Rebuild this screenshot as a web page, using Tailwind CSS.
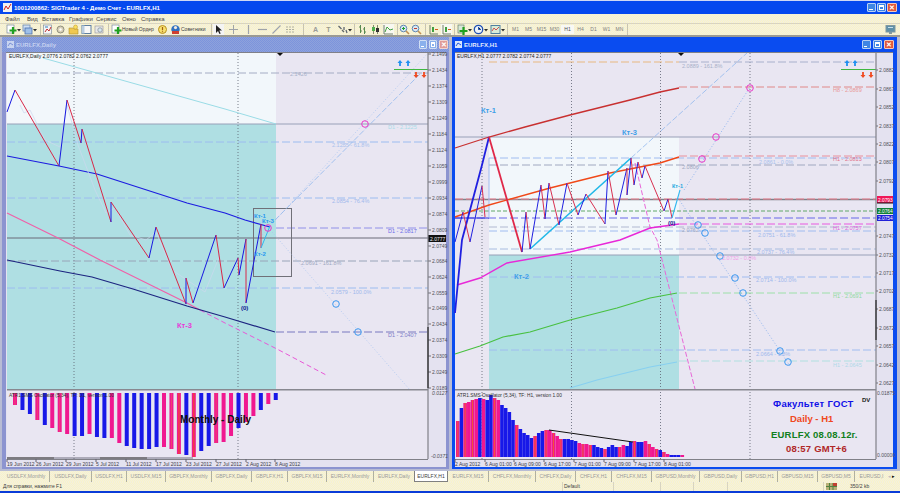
<!DOCTYPE html>
<html lang="ru">
<head>
  <meta charset="UTF-8" />
  <title>SIGTrader 4</title>
  <script src="https://cdn.jsdelivr.net/npm/@tailwindcss/browser@4"></script>
</head>
<body class="w-[900px] h-[493px] overflow-hidden bg-[#d8d8e4] font-['Liberation_Sans',sans-serif] text-[6px] leading-none">

  <!-- shared toolbar icons -->
  <svg class="hidden">
    <symbol id="i-new" viewBox="0 0 11 11"><rect x="1" y="1" width="7" height="8" fill="#fff" stroke="#7a8a9a" stroke-width=".7"/><path d="M7 3v7M3.5 6.5h7" stroke="#20a020" stroke-width="2.2"/></symbol>
    <symbol id="i-prof" viewBox="0 0 11 11"><rect x="1" y="1" width="7" height="6" fill="#cfe0f4" stroke="#6c88b0" stroke-width=".8"/><rect x="3" y="4" width="7" height="6" fill="#9fc0e8" stroke="#4c70b0" stroke-width=".8"/></symbol>
    <symbol id="i-market" viewBox="0 0 11 11"><rect x="1.5" y="1" width="8" height="9" fill="#f4f4f4" stroke="#8090a0" stroke-width=".7"/><path d="M3 8l2-3 2 2 2-4" stroke="#c03030" fill="none"/><path d="M3 3h3" stroke="#3080c0"/></symbol>
    <symbol id="i-nav" viewBox="0 0 11 11"><circle cx="5.5" cy="5.5" r="3.5" fill="#d8d0b8" stroke="#909080"/><circle cx="5.5" cy="5.5" r="1.2" fill="#fff"/></symbol>
    <symbol id="i-star" viewBox="0 0 11 11"><path d="M1 4h4l1 1h4v5H1z" fill="#f0c850" stroke="#b09030" stroke-width=".6"/><circle cx="7.5" cy="3" r="2" fill="#f8e060" stroke="#c09020" stroke-width=".5"/></symbol>
    <symbol id="i-win" viewBox="0 0 11 11"><rect x="1" y="1.5" width="9" height="8" fill="#f8f8f8" stroke="#6080a0"/><rect x="1" y="1.5" width="2.5" height="8" fill="#b8cce0"/></symbol>
    <symbol id="i-glass" viewBox="0 0 11 11"><rect x="1" y="2" width="8" height="7" fill="#e8e8e8" stroke="#a0a0a0" stroke-width=".7"/><circle cx="6" cy="6" r="2.2" fill="#d8e8f0" stroke="#808890" stroke-width=".7"/></symbol>
    <symbol id="i-warn" viewBox="0 0 11 11"><circle cx="5.5" cy="5.5" r="4" fill="#f8e070" stroke="#b89020"/><path d="M5.5 3v3.2M5.5 7.2v1" stroke="#a06010" stroke-width="1.2"/></symbol>
    <symbol id="i-ea" viewBox="0 0 11 11"><circle cx="5.5" cy="5.5" r="4.2" fill="#3070c0"/><path d="M2 7h7v3H2z" fill="#d04030"/><circle cx="5.5" cy="3.6" r="1.6" fill="#f0e8e0"/></symbol>
    <symbol id="i-cursor" viewBox="0 0 11 11"><path d="M3 1v8l2-2 1.5 3 1.2-.6L6.3 6.5H9z" fill="#202020"/></symbol>
    <symbol id="i-cross" viewBox="0 0 11 11"><path d="M5.5 1v9M1 5.5h9" stroke="#a0a4a8"/></symbol>
    <symbol id="i-vert" viewBox="0 0 11 11"><path d="M5.5 1v9" stroke="#a0a4a8" stroke-width="1.2"/></symbol>
    <symbol id="i-hor" viewBox="0 0 11 11"><path d="M1 5.5h9" stroke="#a0a4a8" stroke-width="1.2"/></symbol>
    <symbol id="i-diag" viewBox="0 0 11 11"><path d="M1.5 9.5l8-8" stroke="#a0a4a8" stroke-width="1.1"/></symbol>
    <symbol id="i-chan" viewBox="0 0 11 11"><path d="M1 3h9M1 5.5h9M1 8h9" stroke="#b0b0a0" stroke-dasharray="2 1"/></symbol>
    <symbol id="i-arrow" viewBox="0 0 11 11"><path d="M1.5 2l3 3M5 6l2 2M7 3v3M9 6l1 3" stroke="#606870" stroke-width="1.3"/></symbol>
    <symbol id="i-bars" viewBox="0 0 11 11"><path d="M3.5 1v8M3.5 3H2M3.5 7H5M7.5 3v7M7.5 5H6M7.5 8H9" stroke="#5a8a50" stroke-width="1"/></symbol>
    <symbol id="i-cndl" viewBox="0 0 11 11"><path d="M3.5 1v9M7.5 1v9" stroke="#506040" stroke-width=".7"/><rect x="2" y="3" width="3" height="4" fill="#50b050"/><rect x="6" y="4" width="3" height="4" fill="#303030"/></symbol>
    <symbol id="i-line" viewBox="0 0 11 11"><path d="M1 1v9h9" stroke="#708070" fill="none"/><path d="M2 8l2-5 3 3 3-1" stroke="#40a040" fill="none"/></symbol>
    <symbol id="i-zin" viewBox="0 0 11 11"><circle cx="4.5" cy="4.5" r="3.3" fill="#d8e8f4" stroke="#6088b0"/><path d="M3 4.5h3M4.5 3v3" stroke="#20a030"/><path d="M7 7l3 3" stroke="#c09050" stroke-width="1.6"/></symbol>
    <symbol id="i-zout" viewBox="0 0 11 11"><circle cx="4.5" cy="4.5" r="3.3" fill="#d8e8f4" stroke="#6088b0"/><path d="M3 4.5h3" stroke="#c04030"/><path d="M7 7l3 3" stroke="#c09050" stroke-width="1.6"/></symbol>
    <symbol id="i-shift" viewBox="0 0 11 11"><path d="M2 1v9h8" stroke="#70806a" fill="none"/><rect x="4" y="3" width="2" height="5" fill="#40a040"/><path d="M7 5.5h3" stroke="#d06020"/></symbol>
    <symbol id="i-ind" viewBox="0 0 11 11"><rect x="1" y="1" width="6" height="8" fill="#d8e8d8" stroke="#6a806a" stroke-width=".7"/><path d="M6.5 3v8M2.5 7h8" stroke="#20a020" stroke-width="2.2"/></symbol>
    <symbol id="i-clock" viewBox="0 0 11 11"><circle cx="5.5" cy="5.5" r="4.2" fill="#eef4fa" stroke="#2050b0" stroke-width="1.3"/><path d="M5.5 3v2.5H8" stroke="#2050b0"/></symbol>
    <symbol id="i-tpl" viewBox="0 0 11 11"><rect x="1" y="1.5" width="9" height="8" fill="#d8ecd8" stroke="#5080a0"/><path d="M2 7l2-3 2 2 3-3" stroke="#d05050" fill="none"/></symbol>
    <symbol id="i-mon" viewBox="0 0 11 11"><rect x="1" y="1.5" width="9" height="6.5" fill="#5f90a8" stroke="#8098a0"/><rect x="4" y="8" width="3" height="2" fill="#8098a0"/><path d="M3 3.5h5" stroke="#c8e0ec"/></symbol>
    <symbol id="i-caret" viewBox="0 0 4 11"><path d="M0 5h4L2 7.5z" fill="#303030"/></symbol>
    <pattern id="dith" width="3" height="3" patternUnits="userSpaceOnUse"><rect x="0" y="0" width="1" height="1" fill="#fff" fill-opacity=".35"/><rect x="2" y="1" width="1" height="1" fill="#c8c8e0" fill-opacity=".3"/></pattern>
    <pattern id="peach" width="2" height="2" patternUnits="userSpaceOnUse"><rect width="2" height="2" fill="#f6e8dc"/><rect width="1" height="1" fill="#f0d4b4"/></pattern>
  </svg>

  <div class="flex flex-col h-[493px]">
    <!-- app title -->
    <div class="h-[14px] shrink-0 bg-[#0548ee] border-t border-[#cfd8f4] flex items-center pl-[3px] text-white font-bold text-[6px]">
      <svg class="w-[9px] h-[9px] mr-[2px]" viewBox="0 0 9 9"><rect width="9" height="9" fill="#f0f0f0"/><path d="M1 7l2-4 2 3 3-5" stroke="#d02020" fill="none"/></svg>
      <span>1001200862: SIGTrader 4 - Демо Счет - EURLFX,H1</span>
      <div class="ml-auto flex gap-[1px] mr-[3px]">
        <span class="w-[9px] h-[9px] rounded-[1px] bg-[#3f86e4] border border-[#b8d0f4] flex items-end justify-start"><span class="w-[4px] h-[1.5px] bg-white ml-[1px] mb-[1px]"></span></span>
        <span class="w-[9px] h-[9px] rounded-[1px] bg-[#3f86e4] border border-[#b8d0f4] p-[1px]"><span class="block w-full h-full border border-white border-t-2"></span></span>
        <span class="w-[10px] h-[9px] rounded-[1px] bg-[#e0583c] border border-[#f4c8b8] text-white text-[7px] font-bold flex items-center justify-center">✕</span>
      </div>
    </div>

    <!-- menu -->
    <div class="h-[9px] shrink-0 bg-[repeating-conic-gradient(#fbf5c4_0_25%,#f1eee4_0_50%)] bg-[length:2px_2px] flex items-center text-[#484848] text-[6px]">
      <span class="ml-[5px] w-[22px]">Файл</span><span class="w-[15px]">Вид</span><span class="w-[27px]">Вставка</span><span class="w-[27px]">Графики</span><span class="w-[26px]">Сервис</span><span class="w-[19px]">Окно</span><span>Справка</span>
    </div>

    <!-- toolbar -->
    <div class="h-[14px] shrink-0 bg-[repeating-conic-gradient(#fbf5c4_0_25%,#f1eee4_0_50%)] bg-[length:2px_2px] border-t border-[#d8d4c0] border-b-2 border-b-[#9a9a94] flex items-center text-[#505050]">
      <svg class="ml-[6px] w-[11px] h-[11px]"><use href="#i-new"/></svg><svg class="w-[4px] h-[11px]"><use href="#i-caret"/></svg>
      <svg class="ml-[1px] w-[11px] h-[11px]"><use href="#i-prof"/></svg><svg class="w-[4px] h-[11px]"><use href="#i-caret"/></svg>
      <span class="ml-[3px] w-[1px] h-[11px] bg-[#c8c4b0]"></span>
      <svg class="ml-[1px] w-[11px] h-[11px]"><use href="#i-market"/></svg>
      <svg class="ml-[2px] w-[11px] h-[11px]"><use href="#i-nav"/></svg>
      <svg class="ml-[2px] w-[11px] h-[11px]"><use href="#i-star"/></svg>
      <svg class="ml-[2px] w-[11px] h-[11px]"><use href="#i-win"/></svg>
      <svg class="ml-[2px] w-[11px] h-[11px]"><use href="#i-glass"/></svg>
      <span class="ml-[3px] w-[1px] h-[11px] bg-[#c8c4b0]"></span>
      <svg class="ml-[2px] w-[11px] h-[11px]"><use href="#i-new"/></svg>
      <span class="w-[33px] whitespace-nowrap text-[5px] text-[#404040]">Новый Ордер</span>
      <svg class="ml-[2px] w-[11px] h-[11px]"><use href="#i-warn"/></svg>
      <svg class="ml-[2px] w-[11px] h-[11px]"><use href="#i-ea"/></svg>
      <span class="w-[28px] whitespace-nowrap text-[5px] text-[#404040]">Советники</span>
      <span class="ml-[2px] w-[1px] h-[11px] bg-[#c8c4b0]"></span>
      <svg class="ml-[1px] w-[11px] h-[11px] bg-[#f4f4f4]"><use href="#i-cursor"/></svg>
      <svg class="ml-[4px] w-[11px] h-[11px]"><use href="#i-cross"/></svg>
      <svg class="ml-[4px] w-[11px] h-[11px]"><use href="#i-vert"/></svg>
      <svg class="ml-[3px] w-[11px] h-[11px]"><use href="#i-hor"/></svg>
      <svg class="ml-[3px] w-[11px] h-[11px]"><use href="#i-diag"/></svg>
      <svg class="ml-[3px] w-[11px] h-[11px]"><use href="#i-chan"/></svg>
      <span class="ml-[7px] w-[1px] h-[11px] bg-[#c8c4b0]"></span>
      <span class="ml-[6px] w-[11px] text-center text-[7px] font-bold text-[#9a9a9a]">A</span>
      <span class="ml-[2px] w-[11px] text-center text-[7px] font-bold text-[#9a9a8a]">T</span>
      <svg class="ml-[3px] w-[11px] h-[11px]"><use href="#i-arrow"/></svg><svg class="w-[4px] h-[11px]"><use href="#i-caret"/></svg>
      <span class="ml-[2px] w-[1px] h-[11px] bg-[#c8c4b0]"></span>
      <svg class="ml-[2px] w-[11px] h-[11px]"><use href="#i-bars"/></svg>
      <svg class="ml-[2px] w-[11px] h-[11px]"><use href="#i-cndl"/></svg>
      <svg class="ml-[2px] w-[11px] h-[11px] bg-[#f8f8f0]"><use href="#i-line"/></svg>
      <span class="ml-[3px] w-[1px] h-[11px] bg-[#c8c4b0]"></span>
      <svg class="ml-[1px] w-[11px] h-[11px]"><use href="#i-zin"/></svg>
      <svg class="ml-[1px] w-[11px] h-[11px]"><use href="#i-zout"/></svg>
      <span class="ml-[3px] w-[1px] h-[11px] bg-[#c8c4b0]"></span>
      <svg class="ml-[2px] w-[11px] h-[11px]"><use href="#i-shift"/></svg>
      <svg class="ml-[2px] w-[11px] h-[11px] bg-[#f8f8f0]"><use href="#i-shift"/></svg>
      <span class="ml-[2px] w-[1px] h-[11px] bg-[#c8c4b0]"></span>
      <svg class="ml-[2px] w-[11px] h-[11px]"><use href="#i-ind"/></svg><svg class="w-[4px] h-[11px]"><use href="#i-caret"/></svg>
      <svg class="ml-[1px] w-[11px] h-[11px]"><use href="#i-clock"/></svg><svg class="w-[4px] h-[11px]"><use href="#i-caret"/></svg>
      <svg class="ml-[2px] w-[11px] h-[11px]"><use href="#i-tpl"/></svg><svg class="w-[4px] h-[11px]"><use href="#i-caret"/></svg>
      <span class="ml-[2px] w-[1px] h-[11px] bg-[#c8c4b0]"></span>
      <div class="ml-[1px] flex text-[5px] text-[#808080]">
        <span class="w-[13px] text-center">M1</span><span class="w-[13px] text-center">M5</span><span class="w-[13px] text-center">M15</span><span class="w-[13px] text-center">M30</span><span class="w-[13px] text-center bg-[#f8f8f4] py-[2px] -my-[2px] text-[#505050]">H1</span><span class="w-[13px] text-center">H4</span><span class="w-[13px] text-center">D1</span><span class="w-[13px] text-center">W1</span><span class="w-[13px] text-center">MN</span>
      </div>
      <span class="ml-[1px] w-[1px] h-[11px] bg-[#c8c4b0]"></span>
      <svg class="ml-auto mr-[4px] w-[11px] h-[11px]"><use href="#i-mon"/></svg>
    </div>

    <!-- chart windows -->
    <div class="h-[434px] shrink-0 flex items-start bg-[#b8bcd4]">
      <div class="ml-[2px] w-[447px] h-[432px] flex flex-col bg-[#8c9cd8]">
        <div class="h-[15px] shrink-0 bg-[repeating-conic-gradient(#7c94dc_0_25%,#8ea2dc_0_50%)] bg-[length:2px_2px] flex items-center pl-[5px] text-[#c4d0f0] text-[6px] font-bold">
          <svg class="w-[7px] h-[7px] mr-[2px]" viewBox="0 0 7 7"><rect width="7" height="7" fill="#c8d4f0"/><path d="M1 5l2-3 3 2" stroke="#7a90d8" fill="none"/></svg>
          <span>EURLFX,Daily</span>
          <div class="ml-auto flex gap-[2px] mr-[1px]">
            <span class="w-[8px] h-[9px] rounded-[1px] bg-[#8ab0ec] border border-[#d0def4] flex items-end"><span class="w-[3px] h-[1.5px] bg-white ml-[1px] mb-[1px]"></span></span>
            <span class="w-[8px] h-[9px] rounded-[1px] bg-[#8ab0ec] border border-[#d0def4] p-[1px]"><span class="block w-full h-full border border-white border-t-2"></span></span>
            <span class="w-[9px] h-[9px] rounded-[1px] bg-[#e09c98] border border-[#f0d4d0] text-white text-[7px] flex items-center justify-center">✕</span>
          </div>
        </div>
        <svg id="chartL" class="shrink-0" width="447" height="417" viewBox="2 52 447 417"></svg>
      </div>

      <div class="ml-[3px] w-[445px] h-[432px] flex flex-col bg-[#0a4cf0]">
        <div class="h-[15px] shrink-0 bg-[#0a4cf0] flex items-center pl-[3px] text-[#e4ecfc] text-[6px] font-bold">
          <svg class="w-[7px] h-[7px] mr-[2px]" viewBox="0 0 7 7"><rect width="7" height="7" fill="#d8e4fa"/><path d="M1 5l2-3 3 2" stroke="#2058e0" fill="none"/></svg>
          <span>EURLFX,H1</span>
          <div class="ml-auto flex gap-[2px] mr-[3px]">
            <span class="w-[9px] h-[9px] rounded-[1px] bg-[#3f86e4] border border-[#b8d0f4] flex items-end"><span class="w-[3px] h-[1.5px] bg-white ml-[1px] mb-[1px]"></span></span>
            <span class="w-[9px] h-[9px] rounded-[1px] bg-[#3f86e4] border border-[#b8d0f4] p-[1px]"><span class="block w-full h-full border border-white border-t-2"></span></span>
            <span class="w-[10px] h-[9px] rounded-[1px] bg-[#e0583c] border border-[#f4c8b8] text-white text-[7px] font-bold flex items-center justify-center">✕</span>
          </div>
        </div>
        <svg id="chartR" class="shrink-0" width="445" height="417" viewBox="452 52 445 417"></svg>
      </div>
    </div>

    <!-- tabs -->
    <div class="h-[11px] shrink-0 bg-[repeating-conic-gradient(#fbf5c4_0_25%,#f1eee4_0_50%)] bg-[length:2px_2px] flex items-stretch pl-[3px] text-[5px] text-[#9a9a9a] whitespace-nowrap">
      <span class="w-[47px] border-r border-[#b0b0a0] flex items-center justify-center">USDLFX,Monthly</span>
      <span class="w-[42px] border-r border-[#b0b0a0] flex items-center justify-center">USDLFX,Daily</span>
      <span class="w-[35px] border-r border-[#b0b0a0] flex items-center justify-center">USDLFX,H1</span>
      <span class="w-[39px] border-r border-[#b0b0a0] flex items-center justify-center">USDLFX,M15</span>
      <span class="w-[46px] border-r border-[#b0b0a0] flex items-center justify-center">GBPLFX,Monthly</span>
      <span class="w-[40px] border-r border-[#b0b0a0] flex items-center justify-center">GBPLFX,Daily</span>
      <span class="w-[36px] border-r border-[#b0b0a0] flex items-center justify-center">GBPLFX,H1</span>
      <span class="w-[39px] border-r border-[#b0b0a0] flex items-center justify-center">GBPLFX,M15</span>
      <span class="w-[47px] border-r border-[#b0b0a0] flex items-center justify-center">EURLFX,Monthly</span>
      <span class="w-[40px] flex items-center justify-center">EURLFX,Daily</span>
      <span class="w-[34px] bg-white border border-t-0 border-[#808080] text-[#404040] flex items-center justify-center">EURLFX,H1</span>
      <span class="w-[41px] border-r border-[#b0b0a0] flex items-center justify-center">EURLFX,M15</span>
      <span class="w-[47px] border-r border-[#b0b0a0] flex items-center justify-center">CHFLFX,Monthly</span>
      <span class="w-[40px] border-r border-[#b0b0a0] flex items-center justify-center">CHFLFX,Daily</span>
      <span class="w-[36px] border-r border-[#b0b0a0] flex items-center justify-center">CHFLFX,H1</span>
      <span class="w-[40px] border-r border-[#b0b0a0] flex items-center justify-center">CHFLFX,M15</span>
      <span class="w-[48px] border-r border-[#b0b0a0] flex items-center justify-center">GBPUSD,Monthly</span>
      <span class="w-[42px] border-r border-[#b0b0a0] flex items-center justify-center">GBPUSD,Daily</span>
      <span class="w-[36px] border-r border-[#b0b0a0] flex items-center justify-center">GBPUSD,H1</span>
      <span class="w-[40px] border-r border-[#b0b0a0] flex items-center justify-center">GBPUSD,M15</span>
      <span class="w-[37px] border-r border-[#b0b0a0] flex items-center justify-center">GBPUSD,M5</span>
      <span class="w-[33px] flex items-center justify-center">EURUSD,I</span>
      <span class="text-[#c0c0c0] flex items-center">◂</span>
      <span class="ml-[1px] text-black flex items-center">▸</span>
    </div>

    <!-- status -->
    <div class="h-[9px] shrink-0 bg-[repeating-conic-gradient(#fbf5c4_0_25%,#f1eee4_0_50%)] bg-[length:2px_2px] flex items-center text-[5px] text-[#404040] whitespace-nowrap">
      <span class="ml-[3px] w-[559px]">Для справки, нажмите F1</span>
      <span class="w-[51px] h-full border-l border-[#d8d4c0] pl-[1px] flex items-center">Default</span>
      <span class="w-[47px] h-full border-l border-[#d8d4c0]"></span>
      <span class="w-[33px] h-full border-l border-[#d8d4c0]"></span>
      <span class="w-[34px] h-full border-l border-[#d8d4c0]"></span>
      <span class="w-[96px] h-full border-l border-[#d8d4c0]"></span>
      <span class="h-full border-l border-[#d8d4c0] pl-[2px] flex items-center">
        <svg class="w-[11px] h-[7px] mr-[13px]" viewBox="0 0 11 7"><rect width="11" height="7" fill="#b8b078"/><path d="M0 3.5h11M3.5 0v7M7 0v7" stroke="#508040"/><path d="M7 0h4v3H7z" fill="#c04030"/></svg>
        350/2 kb
      </span>
    </div>
    <div class="h-[2px] shrink-0 bg-[#0a3cd8]"></div>
  </div>

  <script>
    const LAV = '#e9e6f2';
    const ln = (x1, y1, x2, y2, c, w = 1, dash = '') =>
      `<line x1="${x1}" y1="${y1}" x2="${x2}" y2="${y2}" stroke="${c}" stroke-width="${w}"${dash ? ` stroke-dasharray="${dash}"` : ''}/>`;
    const poly = (pts, c, w = 1, dash = '') =>
      `<polyline points="${pts.join(' ')}" fill="none" stroke="${c}" stroke-width="${w}"${dash ? ` stroke-dasharray="${dash}"` : ''}/>`;
    const txt = (x, y, s, c, size = 5.5, extra = '') =>
      `<text x="${x}" y="${y}" fill="${c}" font-size="${size}" ${extra}>${s}</text>`;
    const circ = (x, y, c) => `<circle cx="${x}" cy="${y}" r="3.3" fill="none" stroke="${c}" stroke-width="1"/>`;
    const zig = (pts, up, down, w = 1) => {
      let s = '';
      for (let i = 1; i < pts.length; i++) {
        const a = pts[i - 1], b = pts[i];
        s += ln(a[0], a[1], b[0], b[1], b[1] < a[1] ? up : down, w);
      }
      return s;
    };
    const upDown = (x1, x2, x3, x4) =>
      [x1, x2].map(x => `<path d="M${x} 60l-2.5 3h1.6v3h1.8v-3h1.6z" fill="#2090f0"/>`).join('') +
      [x3, x4].map(x => `<path d="M${x} 78l-2.5 -3h1.6v-3h1.8v3h1.6z" fill="#f04a20"/>`).join('');
    const bar = (x, top, bot, w, c, inner) =>
      `<rect x="${x}" y="${top}" width="${w}" height="${bot - top}" fill="${c}"/>` +
      (inner ? `<rect x="${x + w / 2 - .5}" y="${top}" width="1" height="${bot - top}" fill="${inner}"/>` : '');

    // left chart, daily
    (function () {
      let s = `<rect x="2" y="52" width="447" height="417" fill="#8c94d0"/>`;
      s += `<rect x="6" y="52" width="440" height="415" fill="#e4e2f0"/>`;
      s += ln(6, 52.5, 446, 52.5, '#808088');
      s += `<rect x="7" y="53" width="421" height="406" fill="${LAV}"/>`;
      s += `<rect x="7" y="53" width="269" height="71" fill="#f2f7fb"/><rect x="7" y="124" width="269" height="265" fill="#afdfe3"/>`;
      s += `<rect x="7" y="53" width="421" height="406" fill="url(#dith)"/>`;

      s += ln(74, 53, 74, 459, '#5a6070', .8, '1 2') + ln(238, 53, 238, 459, '#5a6070', .8, '1 2');
      s += ln(7, 73, 428, 73, '#a4acc4', 1, '8 3');
      s += ln(7, 124, 428, 124, '#98a0b8', 1);
      s += ln(7, 142, 428, 142, '#9cbcf0', 1, '8 3');
      s += ln(7, 198, 428, 198, '#9cbcf0', 1, '8 3');
      s += ln(276, 228, 428, 228, '#9090e8', 1, '8 3');
      s += ln(7, 238, 428, 238, '#6a6a78', 1);
      s += ln(7, 261, 428, 261, '#98a4b8', 1, '8 3');
      s += ln(7, 288, 428, 288, '#9cbcf0', 1, '8 3');
      s += ln(276, 332, 428, 332, '#7878c0', 1, '8 3');
      s += `<rect x="253.5" y="208.5" width="38" height="68" fill="none" stroke="#707078"/>`;

      // fan lines
      s += ln(262, 235, 428, 53, '#a8c4f0', .8, '1 2');
      s += ln(275, 220, 420, 74, '#90b8ee', .8, '6 2');
      s += ln(272, 232, 410, 390, '#a8c4f0', .8, '1 2');

      s += poly(['43,58', '225,109', '276,124'], '#9adce6', 1);
      s += poly(['7,156', '59,166', '97,174', '187,203', '225,213', '245,220', '270,227'], '#1c1ce0', 1.2);
      s += poly(['7,213', '58,238', '100,260', '187,303', '200,310'], '#f060a8', 1.2);
      s += poly(['200,310', '225,323', '277,349', '328,376'], '#e858d8', 1, '5 3');
      s += poly(['7,260', '60,271', '92,277', '133,289', '187,306', '225,317', '275,332'], '#1c2480', 1.2);
      s += poly(['20,105', '24,113', '30,110', '45,140', '60,147', '67,105', '78,145', '95,190', '106,213', '115,208', '130,235', '146,240', '156,232', '172,270', '205,292', '220,255'], '#ccd8ee', .7);

      s += zig([[7,112],[15,90],[59,166],[67,100],[81,143],[82,129],[111,222],[111,202],[149,258],[156,227],[186,304],[186,278],[193,303],[216,235],[224,288],[238,258],[239,275],[246,239],[246,303],[261,224],[261,248]], '#1818e0', '#d82848', 1);
      s += ln(261, 248, 270, 226, '#30b8f0', 1);

      s += circ(365, 124, '#e838c8') + circ(268, 228, '#e838c8') + circ(336, 304, '#3c98f0') + circ(358, 332, '#3c98f0');
      s += `<path d="M277 53h6l-3 3z" fill="#101010"/>`;

      s += ln(394, 69.5, 428, 69.5, '#40b840', 1.2) + upDown(400, 408, 416, 424);

      s += txt(9, 58, 'EURLFX,Daily  2.0776 2.0782 2.0762 2.0777', '#202020', 5);
      s += txt(290, 76, '2.1426', '#a8b0c8');
      s += txt(332, 147, '2.1255 - 61.8%', '#a8c0ec');
      s += txt(388, 129, 'D1 - 2.1225', '#a8dce8');
      s += txt(332, 203, '2.0854 - 76.4%', '#a0b8ec');
      s += txt(388, 233, 'D1 - 2.0817', '#6c6ce8');
      s += txt(301, 265, '2.0691 - 161.8%', '#a0a8c0');
      s += txt(331, 294, '2.0579 - 100.0%', '#a0b8ec');
      s += txt(388, 337, 'D1 - 2.0407', '#7c7cc8');
      s += txt(254, 218, 'Кт-1', '#2898f0', 6, 'font-weight="bold"');
      s += txt(262, 223, 'Кт-3', '#2898f0', 6, 'font-weight="bold"');
      s += txt(254, 256, 'Кт-2', '#2898f0', 6, 'font-weight="bold"');
      s += txt(177, 328, 'Кт-3', '#e838d8', 7.5, 'font-weight="bold"');
      s += txt(241, 310, '(0)', '#101890', 6, 'font-weight="bold"');

      // price axis
      const prices = ['2.1499','2.1434','2.1374','2.1309','2.1249','2.1184','2.1124','2.1059','2.0999','2.0934','2.0874','2.0809','2.0749','2.0684','2.0624','2.0559','2.0499','2.0434','2.0374','2.0309','2.0249','2.0189'];
      const ys = [54,70,86,102,118,134,150,166,182,198,214,230,246,261,277,293,308,324,340,356,372,388];
      prices.forEach((p, i) => { s += ln(428, ys[i], 431, ys[i], '#707078') + txt(432, ys[i] + 2, p, '#505058', 5); });
      s += `<rect x="428" y="235" width="18" height="7" fill="#101010"/>` + txt(430, 241, '2.0777', '#f0f0f0', 5);
      s += ln(428, 53, 428, 459, '#808088', 1.2) + ln(428, 327, 428, 388, '#101010', 1);

      // indicator pane
      s += `<rect x="7" y="389" width="421" height="1.5" fill="#888890"/>`;
      const bots = [405,410,414,420,425,428,432,434,436,436,434,437,438,438,443,446,448,449,449,447,447,449,454,455,457,451,446,443,442,436,428,422,416,410,404,400];
      const cols = 'pbbpbpppbbpbbppbbbbbpprbrbbpppbppbpb';
      bots.forEach((b, i) => {
        const c = cols[i];
        s += bar(13 + 7.45 * i, 393, b, 4, c === 'b' ? '#1818e8' : '#f01890', c === 'r' ? '#f05020' : (c === 'p' && i % 3 === 0 ? '#f04070' : ''));
      });
      s += txt(9, 397, 'ATR1.SMS Oscillator (5,34), TF: D1, version 1.00', '#303030', 4.8);
      s += txt(180, 423, 'Monthly - Daily', '#101010', 10, 'font-weight="bold"');
      s += ln(7, 458, 54, 458, '#101010') + ln(54, 458, 100, 458, '#707080') + ln(100, 458, 147, 458, '#101010') + ln(147, 458, 193, 458, '#707080');
      s += txt(432, 395, '0.0127', '#505058', 5, 'font-style="italic"') + txt(431, 458, '-0.0371', '#505058', 5, 'font-style="italic"');
      s += ln(7, 459.5, 428, 459.5, '#808088');

      // time axis
      [['19 Jun 2012',7],['26 Jun 2012',36],['29 Jun 2012',66],['5 Jul 2012',96],['11 Jul 2012',126],['17 Jul 2012',156],['23 Jul 2012',186],['27 Jul 2012',216],['2 Aug 2012',246],['8 Aug 2012',275]]
        .forEach(t => { s += ln(t[1], 459, t[1], 462, '#606070') + txt(t[1], 466, t[0], '#404048', 5); });
      document.getElementById('chartL').innerHTML = s;
    })();

    // right chart, H1
    (function () {
      let s = `<rect x="452" y="52" width="445" height="417" fill="#0a4cf0"/>`;
      s += `<rect x="455" y="52" width="438" height="415" fill="#e4e2f0"/>`;
      s += ln(455, 52.5, 893, 52.5, '#808088');
      s += `<rect x="455" y="53" width="421" height="406" fill="${LAV}"/>`;
      s += `<rect x="489" y="62" width="190" height="75" fill="url(#peach)"/>`;
      s += `<rect x="489" y="137" width="190" height="118" fill="#f2f7fb"/><rect x="489" y="255" width="190" height="134" fill="#afdfe3"/>`;
      s += `<rect x="455" y="53" width="421" height="406" fill="url(#dith)"/>`;

      [482, 571.5, 660.5, 750].forEach(x => { s += ln(x, 53, x, 459, '#5a6070', .8, '1 2'); });

      s += ln(489, 62, 679, 62, '#e8b880', 1, '8 3') + ln(679, 62, 876, 62, '#a8b0cc', 1, '8 3');
      s += ln(679, 87, 876, 87, '#e08888', 1, '8 3');
      s += ln(455, 137, 876, 137, '#98a0b8');
      s += ln(679, 156, 876, 156, '#e8909c', 1, '8 3');
      s += ln(489, 158, 876, 158, '#a0bcf0', 1, '8 3');
      s += ln(489, 165, 876, 165, '#a0a8c0', 1, '8 3');
      s += ln(455, 199.5, 876, 199.5, '#808088', 1.4) + ln(455, 199, 876, 199, '#f08090', 1, '8 3');
      s += ln(455, 211, 876, 211, '#60a868', 1, '4 2');
      s += ln(455, 218, 876, 218, '#6868e8', 1, '8 3');
      s += ln(679, 224, 876, 224, '#e858e0', 1, '8 3');
      s += ln(489, 227, 876, 227, '#b0b8d0', 1, '8 3');
      s += ln(489, 231, 876, 231, '#a0bcf0', 1, '8 3');
      s += ln(489, 249, 876, 249, '#a8bce0', 1, '8 3');
      s += ln(489, 255, 876, 255, '#98a0b8');
      s += ln(489, 277, 876, 277, '#a0bcf0', 1, '8 3');
      s += ln(679, 293, 876, 293, '#9ce0a8', 1, '8 3');
      s += ln(489, 350, 876, 350, '#a0bcf0', 1, '8 3');
      s += ln(679, 361, 876, 361, '#b0e0e0', 1, '8 3');
      s += ln(455, 218, 489, 218, '#3030e0') + ln(489, 158, 489, 218, '#a0bcf0');

      // fan lines
      s += ln(631, 158, 747, 53, '#90b8ee', .8, '6 2');
      s += ln(684, 190, 752, 84, '#88b0ee', .9, '1 2');
      s += ln(678, 198, 790, 366, '#88b0ee', .9, '1 2');
      s += poly(['635,163', '650,227', '657,240', '695,389'], '#e868d8', 1, '5 2');

      s += poly(['455,148', '489,137', '525,127', '570,115', '630,100', '660,92', '679,88'], '#c83030', 1.3);
      s += poly(['455,217', '489,205', '550,188', '610,173', '660,163', '679,157'], '#f04818', 1.4);
      s += poly(['457,285', '480,278', '507,263', '570,252', '620,240', '650,228', '679,224'], '#e828d8', 1.4);
      s += poly(['455,354', '480,346', '503,337', '530,332', '570,320', '617,308', '650,298', '677,293'], '#48c040', 1.2);
      s += poly(['570,388', '597,380', '650,367', '677,362'], '#88d0f0', 1.2);
      s += ln(530, 249, 631, 158, '#20b8e8', 1.6);

      s += poly(['455,313', '462,240', '482,165', '489,137'], '#2020e0', 1.8);
      s += ln(489, 137, 522, 252, '#e02848', 1.8);
      s += zig([[455,242],[463,212],[470,242],[482,186],[485,217]], '#2020e0', '#d83050', 1);
      s += zig([[522,252],[526,212],[530,249],[541,185],[545,219],[549,183],[559,225],[567,183],[578,215],[586,194],[605,224],[608,171],[616,215],[627,168],[627,195],[631,158],[634,185],[638,162],[642,178],[645,166],[664,211],[668,199],[672,218]], '#2020e0', '#d83050', 1);
      s += ln(672, 218, 680, 190, '#30b8f0', 1.1);

      s += circ(750, 88, '#e838c8') + circ(716, 137, '#e838c8') + circ(702, 159, '#e838c8');
      [[698,225],[705,233],[720,256],[735,278],[743,293],[780,351],[788,362]].forEach(p => { s += circ(p[0], p[1], '#3c98f0'); });
      s += `<path d="M678 53h6l-3 3z" fill="#101010"/>`;
      s += ln(841, 69.5, 876, 69.5, '#40b840', 1.2) + upDown(847, 855, 863, 871);

      s += txt(457, 58, 'EURLFX,H1  2.0777 2.0782 2.0774 2.0777', '#202020', 5);
      s += txt(682, 68, '2.0889 - 161.8%', '#a8b0c8');
      s += txt(833, 92, 'H8 - 2.0869', '#e89898');
      s += txt(833, 161, 'H1 - 2.0813', '#e07088');
      s += txt(759, 164, '2.0861 - 0.0%', '#a8c0ec');
      s += txt(682, 169, '2.0806', '#a0a8c0');
      s += txt(682, 232, '2.0762', '#a0a8c0');
      s += txt(833, 230, 'H1 - 2.0757', '#e060e0');
      s += txt(758, 237, '2.0751 - 61.8%', '#a0b8ec');
      s += txt(757, 254, '2.0737 - 76.4%', '#a0b8ec');
      s += txt(722, 260, '2.0732 - 0.0%', '#f0a0e8');
      s += txt(756, 282, '2.0714 - 100.0%', '#a0b8ec');
      s += txt(833, 298, 'H1 - 2.0691', '#90d8a0');
      s += txt(756, 356, '2.0664 - 1.8%', '#a0b8ec');
      s += txt(833, 367, 'H1 - 2.0645', '#b0d8e8');
      s += txt(481, 113, 'Кт-1', '#40a0e8', 7.5, 'font-weight="bold"');
      s += txt(622, 135, 'Кт-3', '#40a0e8', 7.5, 'font-weight="bold"');
      s += txt(514, 279, 'Кт-2', '#40a0e8', 7.5, 'font-weight="bold"');
      s += txt(672, 188, 'Кт-1', '#20a8e0', 5.5, 'font-weight="bold"');
      s += txt(668, 225, '(0)', '#101890', 6, 'font-weight="bold"');

      // price axis
      [['2.0882',70],['2.0867',89],['2.0852',107],['2.0837',126],['2.0822',144],['2.0807',162],['2.0792',181],['2.0747',236],['2.0732',255],['2.0717',273],['2.0702',291],['2.0687',309],['2.0672',328],['2.0657',346],['2.0642',365],['2.0627',383]]
        .forEach(p => { s += ln(876, p[1], 878, p[1], '#707078') + txt(879, p[1] + 2, p[0], '#505058', 5); });
      s += `<rect x="877" y="196" width="16" height="7" fill="#f01858"/>` + txt(878, 202, '2.0793', '#fff', 4.8) + ln(877, 203, 893, 203, '#101010');
      s += `<rect x="877" y="208" width="16" height="6" fill="#108038"/>` + txt(878, 213, '2.0764', '#fff', 4.8);
      s += `<rect x="877" y="215" width="16" height="6" fill="#2020d8"/>` + txt(878, 220, '2.0754', '#fff', 4.8);
      s += ln(876, 53, 876, 459, '#808088', 1.2) + ln(876, 300, 876, 340, '#101010', 1);

      // indicator pane
      s += `<rect x="455" y="389" width="421" height="1.5" fill="#888890"/>`;
      const tops = [421,408,403,402,400,399,398,399,400,395,398,400,405,408,412,420,425,429,433,435,438,436,433,431,430,430,433,436,439,439,439,440,441,443,444,444,445,445,447,448,449,447,445,447,447,445,446,442,441,442,442,441,444,447,449,450,452,454,455,455,455,455];
      const cols = 'pbppppbpbbppbbbbpbbbbrbbpppppbbbbppprbbbpbbbppbbpbbppppbppbbbpp';
      tops.forEach((t, i) => {
        const c = cols[i] || 'p';
        s += bar(456 + 3.68 * i, t, 457, 3.6, c === 'b' ? '#1818e8' : '#f01890', c === 'r' ? '#f06020' : (c === 'p' && i % 2 === 0 ? '#f05838' : ''));
      });
      s += ln(549, 430, 633, 442, '#101010', 1);
      s += txt(457, 397, 'ATR1.SMS Oscillator (5,34), TF: H1, version 1.00', '#303030', 4.8);
      s += txt(773, 407, 'Факультет ГОСТ', '#1010e8', 9.5, 'font-weight="bold" letter-spacing=".3"');
      s += txt(790, 422, 'Daily - H1', '#f04820', 9.5, 'font-weight="bold"');
      s += txt(771, 438, 'EURLFX 08.08.12г.', '#108020', 9.5, 'font-weight="bold" letter-spacing=".2"');
      s += txt(786, 452, '08:57 GMT+6', '#b02828', 9.5, 'font-weight="bold" letter-spacing=".2"');
      s += txt(862, 402, 'DV', '#202020', 6, 'font-weight="bold"');
      s += txt(877, 395, '0.01875', '#505058', 5) + txt(877, 457, '0.00000', '#505058', 5);
      s += ln(455, 459.5, 876, 459.5, '#808088');

      // time axis
      [['2 Aug 2012',455],['6 Aug 01:00',485],['6 Aug 09:00',514],['6 Aug 17:00',544],['7 Aug 01:00',574],['7 Aug 09:00',604],['7 Aug 17:00',634],['8 Aug 01:00',664]]
        .forEach(t => { s += ln(t[1], 459, t[1], 462, '#606070') + txt(t[1], 466, t[0], '#404048', 5); });
      document.getElementById('chartR').innerHTML = s;
    })();
  </script>
</body>
</html>
